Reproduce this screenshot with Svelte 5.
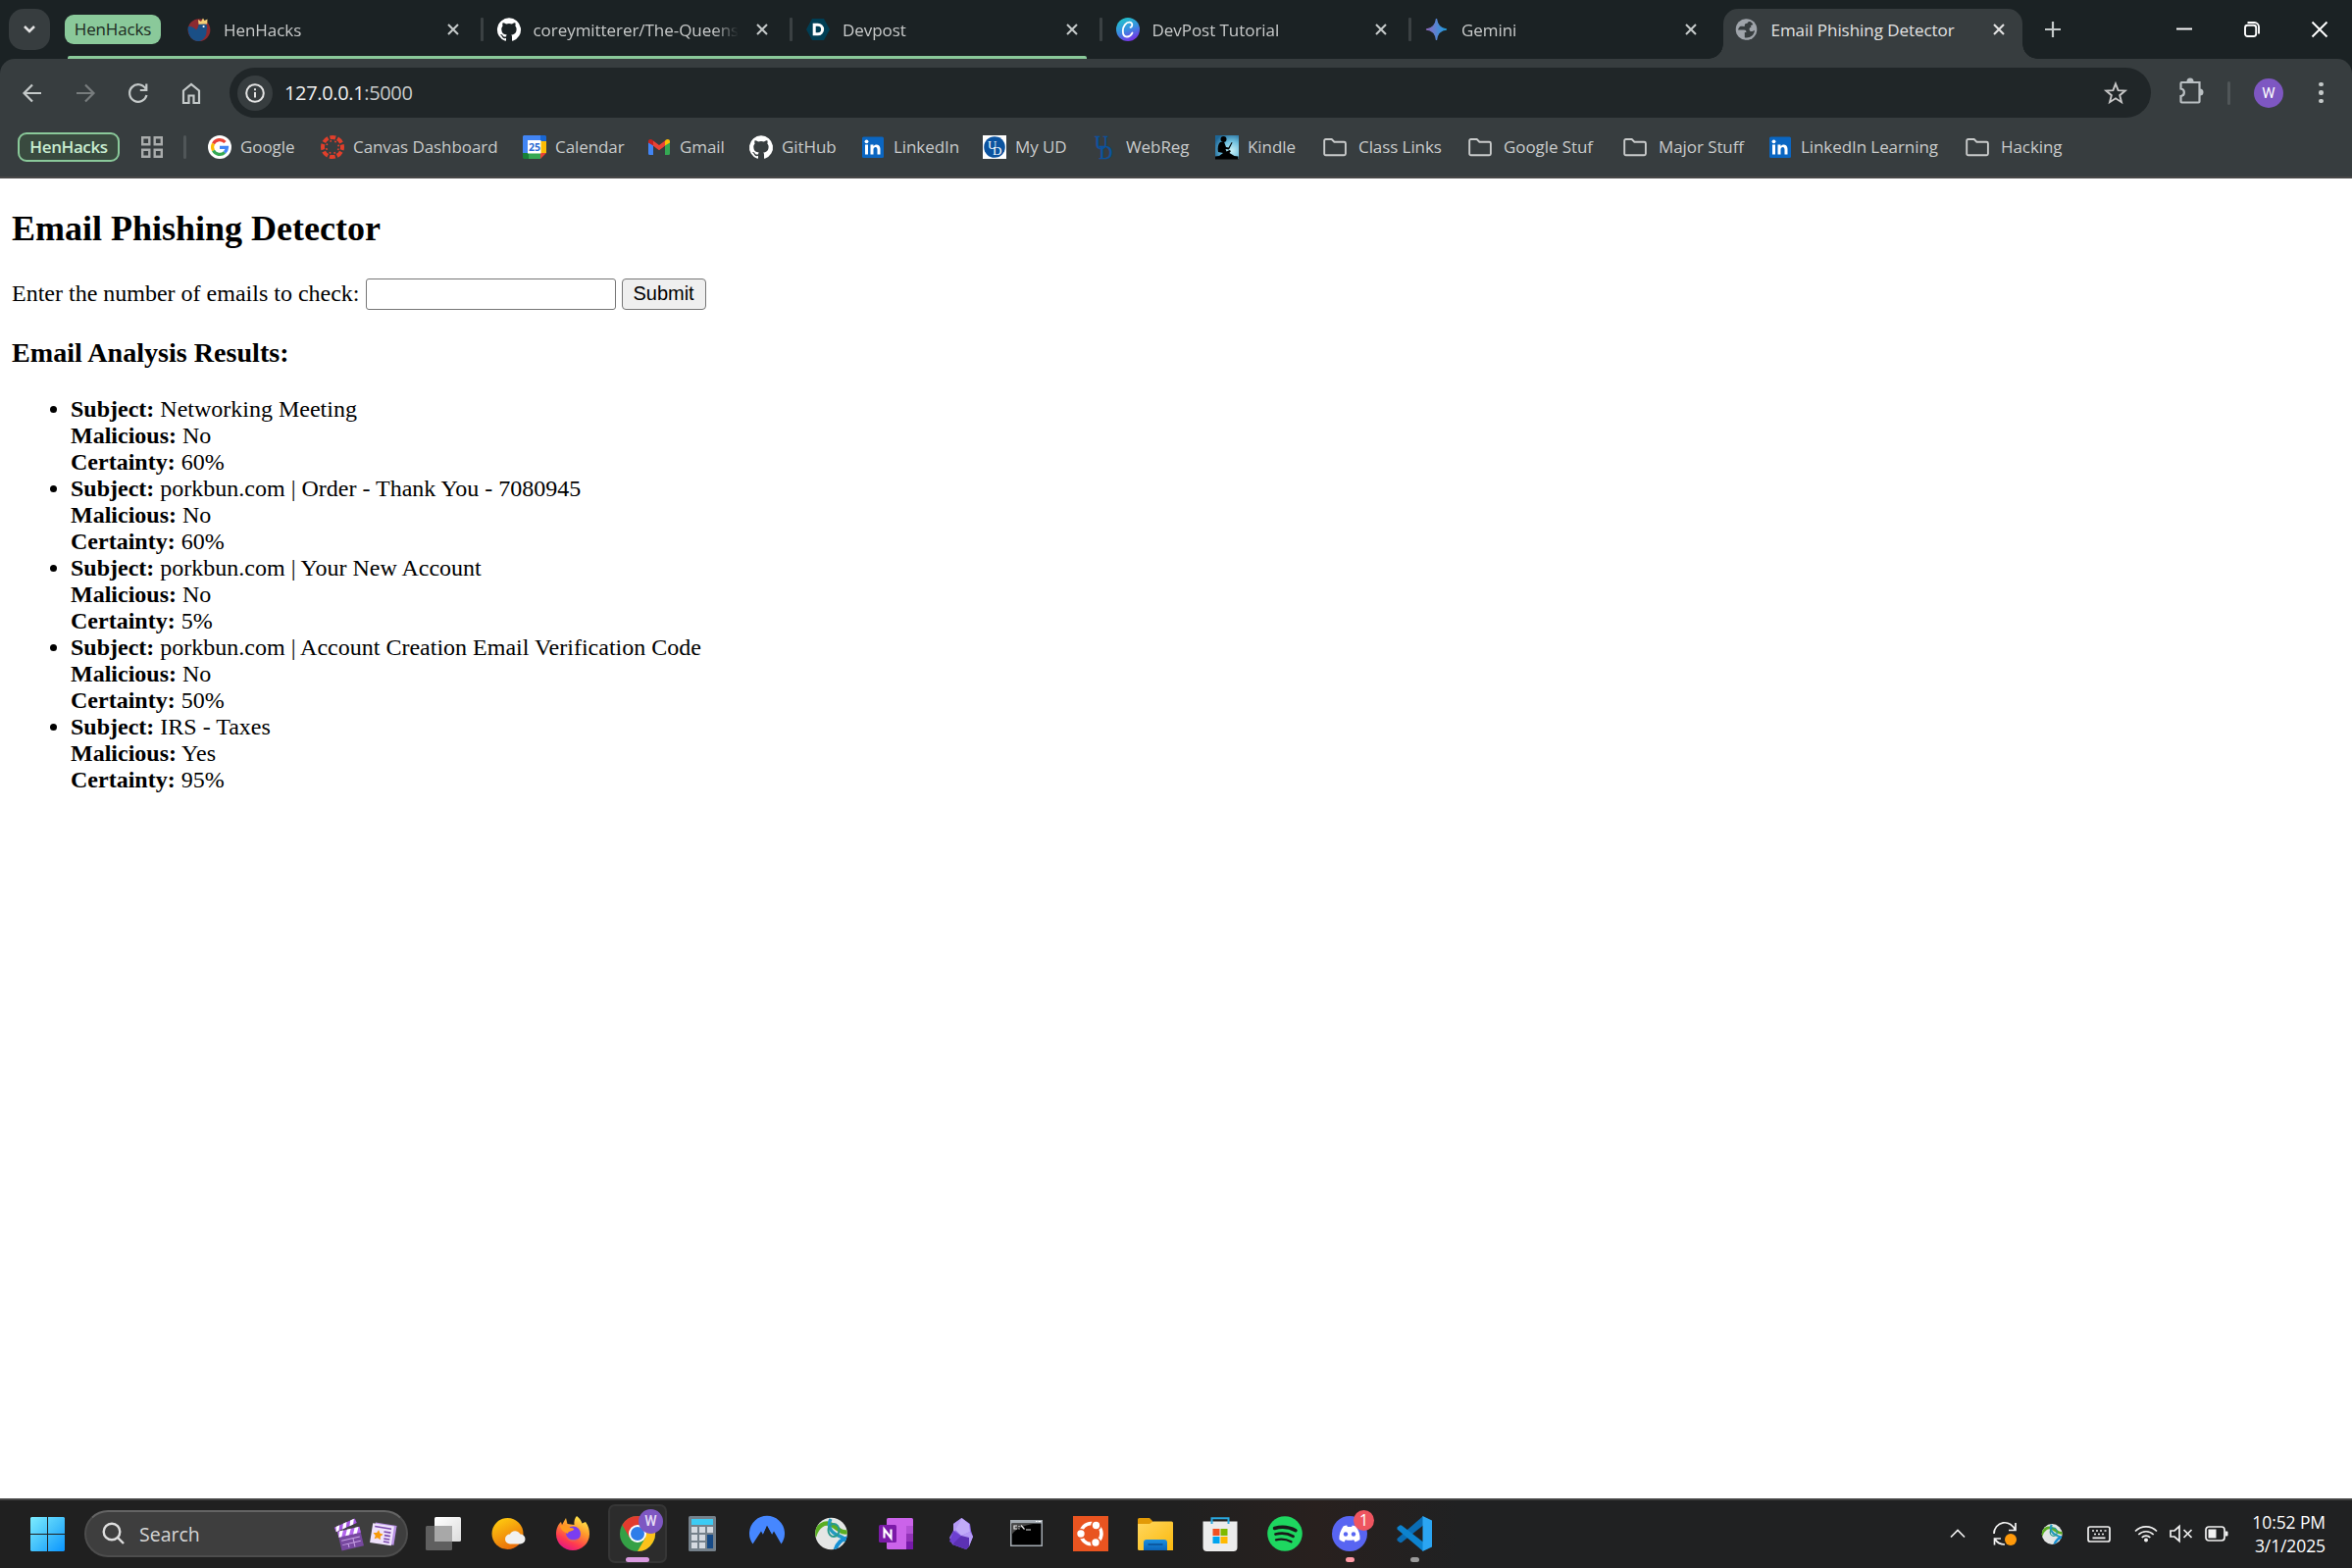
<!-- Desktop view: browser window on the phishing detector page, taskbar below. -->
<script lang="ts">
	type Tab = { title: string; icon: string; active?: boolean; sep?: boolean };
	type Bookmark = { label: string; icon: string; width: number; gap?: number };
	type App = { icon: string; state?: 'active' | 'alert' | 'open' };

	const tabs: Tab[] = [
		{ title: 'HenHacks', icon: 'hen', sep: true },
		{ title: 'coreymitterer/The-Queens', icon: 'github', sep: true },
		{ title: 'Devpost', icon: 'devpost', sep: true },
		{ title: 'DevPost Tutorial', icon: 'canva', sep: true },
		{ title: 'Gemini', icon: 'gemini' },
		{ title: 'Email Phishing Detector', icon: 'globe', active: true }
	];

	// width is the label's box, gap the space between icon and label
	const bookmarks: Bookmark[] = [
		{ label: 'Google', icon: 'google', width: 58 },
		{ label: 'Canvas Dashboard', icon: 'canvas', width: 149 },
		{ label: 'Calendar', icon: 'calendar', width: 70 },
		{ label: 'Gmail', icon: 'gmail', width: 47 },
		{ label: 'GitHub', icon: 'github', width: 57 },
		{ label: 'LinkedIn', icon: 'linkedin', width: 67 },
		{ label: 'My UD', icon: 'myud', width: 57 },
		{ label: 'WebReg', icon: 'webreg', width: 67, gap: 8 },
		{ label: 'Kindle', icon: 'kindle', width: 53 },
		{ label: 'Class Links', icon: 'folder', width: 88, gap: 12 },
		{ label: 'Google Stuf', icon: 'folder', width: 98, gap: 12 },
		{ label: 'Major Stuff', icon: 'folder', width: 88, gap: 12 },
		{ label: 'LinkedIn Learning', icon: 'linkedin', width: 144 },
		{ label: 'Hacking', icon: 'folder', width: 68, gap: 12 }
	];

	const emails = [
		{ subject: 'Networking Meeting', malicious: 'No', certainty: 60 },
		{ subject: 'porkbun.com | Order - Thank You - 7080945', malicious: 'No', certainty: 60 },
		{ subject: 'porkbun.com | Your New Account', malicious: 'No', certainty: 5 },
		{ subject: 'porkbun.com | Account Creation Email Verification Code', malicious: 'No', certainty: 50 },
		{ subject: 'IRS - Taxes', malicious: 'Yes', certainty: 95 }
	];

	const apps: App[] = [
		{ icon: 'taskview' },
		{ icon: 'weather' },
		{ icon: 'firefox' },
		{ icon: 'chrome', state: 'active' },
		{ icon: 'calculator' },
		{ icon: 'nord' },
		{ icon: 'vpn' },
		{ icon: 'onenote' },
		{ icon: 'obsidian' },
		{ icon: 'terminal' },
		{ icon: 'ubuntu' },
		{ icon: 'explorer' },
		{ icon: 'store' },
		{ icon: 'spotify' },
		{ icon: 'discord', state: 'alert' },
		{ icon: 'vscode', state: 'open' }
	];

	let count = $state('');
</script>

{#snippet favicon(name: string)}
	<svg class="fav" viewBox="0 0 24 24">
		{#if name === 'hen'}
			<circle cx="12" cy="12.6" r="11.4" fill="#8c2a30" />
			<path d="M0.7 9.5C3 8.3 6.5 9.5 9 12.5C11 11 11 8 12 6.5L18 6C20.500 7.500 20.500 11 19.500 13C20 19 16 23.500 11.500 24C5 24 0.200 18.500 0.700 9.500z" fill="#1a4f86" />
			<path d="M11.500 6.800L11 2l3 2 2-3.500L17.500 3l3-1.500-.3 5z" fill="#f5cf74" />
			<circle cx="16.600" cy="9" r="1.100" fill="#fff" />
		{:else if name === 'github'}
			<path fill="#fff" d="M12 .3a12 12 0 0 0-3.800 23.400c.6.1.8-.3.8-.6v-2c-3.300.7-4-1.600-4-1.600-.6-1.400-1.400-1.800-1.400-1.800-1-.7.1-.7.1-.7 1.200 0 1.900 1.200 1.900 1.200 1 1.800 2.800 1.300 3.500 1 0-.8.4-1.300.7-1.600-2.700-.3-5.500-1.300-5.500-6 0-1.200.5-2.300 1.300-3.100-.2-.4-.6-1.600 0-3.200 0 0 1-.3 3.400 1.200a11.500 11.500 0 0 1 6 0c2.300-1.500 3.300-1.200 3.300-1.200.6 1.600.2 2.800 0 3.200.9.8 1.300 1.900 1.300 3.200 0 4.600-2.800 5.600-5.500 5.900.5.4.9 1 .9 2.200v3.300c0 .3.1.7.8.6A12 12 0 0 0 12 .3" />
		{:else if name === 'devpost'}
			<path d="M6 1h12l6 11-6 11H6L0 12z" fill="#003e54" />
			<path d="M7.500 6h4.500a6 6 0 0 1 0 12H7.500z" fill="none" stroke="#fff" stroke-width="3.800" transform="translate(2.200 2.400) scale(.8)" />
		{:else if name === 'canva'}
			<defs>
				<linearGradient id="canva-bg" x1=".3" y1="0" x2=".7" y2="1">
					<stop offset="0" stop-color="#20c4cb" /><stop offset=".5" stop-color="#3a8de0" /><stop offset="1" stop-color="#7d2ae8" />
				</linearGradient>
			</defs>
			<circle cx="12" cy="12" r="12" fill="url(#canva-bg)" />
			<path d="M16.500 15.500c-1.300 2.500-3.300 4-5.500 4C8.300 19.500 6.800 17 6.800 13.500c0-4.500 3.200-8.800 6.700-8.800 2 0 3 1.300 2.800 2.800-.1 1.400-1 2.300-1.800 2.300" fill="none" stroke="#fff" stroke-width="1.800" stroke-linecap="round" />
		{:else if name === 'gemini'}
			<defs>
				<linearGradient id="gem" x1="0" y1="0" x2="1" y2="0">
					<stop offset="0" stop-color="#9168c0" /><stop offset=".5" stop-color="#5684d1" /><stop offset="1" stop-color="#1ba1e3" />
				</linearGradient>
			</defs>
			<path d="M11.500 1Q12.500 11 22 12Q12.500 13 11.500 23Q10.500 13 1 12Q10.500 11 11.500 1z" fill="url(#gem)" stroke="url(#gem)" stroke-width="1.200" />
		{:else if name === 'globe'}
			<circle cx="11.500" cy="12" r="10.800" fill="#9fa4aa" />
			<path d="M14 3.500c-1 1.200-1 2.500-2.800 2.600C10 6.200 9.500 7.500 9.800 9c-1.500.2-3.300-.4-4.500-.1-1 .4-2.200 2.300-2.200 3.600H9c2 0 2.500 1 2.400 2.400h-1.600v5.300c5 1 9.600-2 10.200-7.300-1.200.1-1.700 1.200-3.200 1.100-1.500-.1-2.400-1-2.200-2.500.1-1 .8-1.700 2-1.700l-.8-1.500 2.500-1.300c-.8-1.700-2.300-2.900-4.300-3.500z" fill="#373d3f" />
		{:else if name === 'google'}
			<circle cx="12" cy="12" r="12" fill="#fff" />
			<g fill="none" stroke-width="3.200">
				<path d="M17.500 7A7.400 7.400 0 0 0 5.500 8.500" stroke="#ea4335" />
				<path d="M5.500 8.500a7.400 7.400 0 0 0 0 7" stroke="#fbbc04" />
				<path d="M5.500 15.500a7.400 7.400 0 0 0 11.500 2" stroke="#34a853" />
				<path d="M17 17.500a7.400 7.400 0 0 0 2.500-5.200H12" stroke="#4285f4" />
			</g>
		{:else if name === 'canvas'}
			<circle cx="12" cy="12" r="10" fill="none" stroke="#e13f2b" stroke-width="4" stroke-dasharray="5.850 2" stroke-dashoffset="2.900" />
			<circle cx="12" cy="12" r="6.300" fill="none" stroke="#e13f2b" stroke-width="1.700" stroke-dasharray="1.700 3.250" stroke-dashoffset="-1.500" />
		{:else if name === 'calendar'}
			<path d="M1 0h17v6H6v12H0V1z" fill="#4285f4" />
			<path d="M18 0h5l1 1v5h-6z" fill="#1967d2" />
			<path d="M18 6h6v12h-6z" fill="#fbbc04" />
			<path d="M0 18h6v6H1l-1-1z" fill="#188038" />
			<path d="M6 18h12v6H6z" fill="#34a853" />
			<path d="M18 18h6l-6 6z" fill="#ea4335" />
			<path d="M5 5h13.500v13.500H5z" fill="#fff" />
			<text x="11.900" y="16" text-anchor="middle" class="cal">25</text>
		{:else if name === 'gmail'}
			<path d="M1 6.500v12.300c0 .7.500 1.200 1.200 1.200H6V10z" fill="#4285f4" />
			<path d="M23 6.500v12.300c0 .7-.5 1.200-1.200 1.200H18V10z" fill="#34a853" />
			<path d="M1 6.500C1 4 3.500 3.500 5 4.600L6 5.400v5.200L1 7.500z" fill="#c5221f" />
			<path d="M23 6.500C23 4 20.500 3.500 19 4.600l-1 .8v5.200l5-3.100z" fill="#fbbc04" />
			<path d="M6 5.400l6 4.500 6-4.500v5.300l-6 4.500-6-4.500z" fill="#ea4335" />
		{:else if name === 'linkedin'}
			<rect x="1" y="1.500" width="22" height="21.500" rx="1.500" fill="#0a66c2" />
			<path d="M4 9.500h3v10H4zM9.500 9.500h3V11c2-2.700 7-2 7 2.800v5.700h-3V14.500c0-3.500-4-3.200-4 0v5h-3z" fill="#fff" />
			<circle cx="5.500" cy="6.300" r="1.900" fill="#fff" />
		{:else if name === 'myud'}
			<path d="M0 0h24v24H0z" fill="#fff" />
			<circle cx="12" cy="12" r="10.800" fill="#0b539f" />
			<text x="5" y="13.500" class="ud light">U</text>
			<text x="10" y="19.500" class="ud light">D</text>
		{:else if name === 'webreg'}
			<text x="0" y="14" class="ud big">U</text>
			<text x="4.500" y="23.500" class="ud big">D</text>
		{:else if name === 'kindle'}
			<defs>
				<radialGradient id="kin" cx=".7" cy=".65" r=".8">
					<stop offset="0" stop-color="#c9f1f7" /><stop offset=".5" stop-color="#6fc0de" /><stop offset="1" stop-color="#1c6595" />
				</radialGradient>
			</defs>
			<path d="M0 0h24v24H0z" fill="url(#kin)" />
			<g fill="#000">
				<circle cx="8.500" cy="4" r="3" />
				<path d="M5 7l4-.5 2 5.500 2.500.5 3.200-5.500.8.500-3.500 7-3.500-.5 1 2.500 3-1.500 1.500 1-1.500 2 5 3 4 .5v3H0v-3l4-.5 4-3-5-1C2 13 3 9 5 7z" />
			</g>
		{:else if name === 'folder'}
			<path d="M1.200 5.500a1.500 1.500 0 0 1 1.500-1.500h6l2.700 2.700h10a1.500 1.500 0 0 1 1.500 1.500v10.500a1.500 1.500 0 0 1-1.500 1.500H2.700a1.500 1.500 0 0 1-1.500-1.500z" fill="none" stroke="#c9cbcb" stroke-width="1.900" />
		{/if}
	</svg>
{/snippet}

{#snippet cross()}
	<svg class="cross" viewBox="0 0 12 12"><path d="M1 1l10 10M11 1L1 11" /></svg>
{/snippet}

{#snippet appIcon(name: string)}
	<svg class="app-icon" viewBox="0 0 36 36">
		{#if name === 'taskview'}
			<defs><linearGradient id="tv" x2="1" y2="1"><stop stop-color="#fff" /><stop offset="1" stop-color="#dcdcdc" /></linearGradient></defs>
			<rect x="9" y="1" width="27" height="25" rx="1.500" fill="url(#tv)" />
			<rect x="0" y="10" width="27" height="25" rx="1.500" fill="#6b6b6b" opacity=".85" />
			<path d="M9 10h18v16H9z" fill="#a8a8a8" />
		{:else if name === 'weather'}
			<defs><linearGradient id="sun" x1=".2" y1="0" x2=".7" y2="1"><stop stop-color="#ffcd0f" /><stop offset="1" stop-color="#e8680a" /></linearGradient></defs>
			<circle cx="17.500" cy="18" r="16" fill="url(#sun)" />
			<path d="M20 28.500a5 5 0 0 1 0-10c1-3 7-5.500 10.500 0a5 5 0 0 1 0 10z" fill="#f1f1f1" />
		{:else if name === 'firefox'}
			<defs>
				<linearGradient id="fx" x1=".8" y1="0" x2=".3" y2="1"><stop stop-color="#fff44f" /><stop offset=".4" stop-color="#ff9a2b" /><stop offset=".75" stop-color="#ff3b4f" /><stop offset="1" stop-color="#e31587" /></linearGradient>
			</defs>
			<path d="M22 0c3 2 4.500 5 5.500 7.500L31 6c3 4 4 8 4 12.500C35 28 27 35 18 35S1 28 1 18.500C1 13 3 8.500 6 6l1 3 4-7 1.500 6 7 1C19 5.500 20 2 22 0z" fill="url(#fx)" />
			<circle cx="18.500" cy="18" r="7.500" fill="#7a3df0" />
			<path d="M5 10c4-1 8 0 10 2 3 0 5 1 4 2-2 2-6 1-6 4-3-1-7-3-8-8z" fill="#ff9a1f" />
			<path d="M11 18c1 6 8 8 14 4-3 6-14 6-14-4z" fill="#ff6a35" opacity=".7" />
		{:else if name === 'chrome'}
			<circle cx="18" cy="18" r="18" fill="#34a046" />
			<path d="M18 9h15.600A18 18 0 0 1 18 36l7.800-13.500z" fill="#fcc21b" />
			<path d="M2.400 9A18 18 0 0 1 33.600 9H18l-7.800 13.500z" fill="#e33b2e" />
			<circle cx="18" cy="18" r="9" fill="#fff" />
			<circle cx="18" cy="18" r="7" fill="#2f7de9" />
		{:else if name === 'calculator'}
			<rect x="4" y="0" width="28" height="36" rx="1.500" fill="#75818b" />
			<path d="M7 3h22v6H7z" fill="#3ccbf4" />
			<path d="M7 11h6v6H7zM15 11h6v6h-6zM23 11h6v6h-6zM7 19h6v6H7zM15 19h6v6h-6zM7 27h6v6H7zM15 27h6v6h-6z" fill="#d5dae1" />
			<path d="M23 19h6v14h-6z" fill="#164a86" />
		{:else if name === 'nord'}
			<path d="M3.500 28.500A18 18 0 1 1 32.500 28.500L25 15.500l-2 3.500-5-9-4 9-2-3.500z" fill="#4687ff" />
			<path d="M14 19l4-9 5 9-2.500-.5L18 16l-2.500 4z" fill="#1f2022" />
		{:else if name === 'vpn'}
			<clipPath id="ball"><circle cx="17.500" cy="18" r="16.300" /></clipPath>
			<g clip-path="url(#ball)">
				<path d="M0 0h36v36H0z" fill="#e4e6e5" />
				<path d="M0 21C3 10 11 5 18 9s10 9 17 7" fill="none" stroke="#5aae22" stroke-width="4.500" />
				<path d="M17 3c-4 7 0 14 8 17s10 8 8 14" fill="none" stroke="#229abf" stroke-width="3.500" />
				<path d="M21 36c2-8 8-14 15-14" fill="none" stroke="#1690d4" stroke-width="4" />
				<ellipse cx="20" cy="14.500" rx="5.500" ry="6.500" fill="none" stroke="#279a8d" stroke-width="2" />
			</g>
		{:else if name === 'onenote'}
			<rect x="8" y="2" width="27" height="32" rx="1.500" fill="#cb63ea" />
			<path d="M28 10h7v9h-7z" fill="#b351d5" /><path d="M28 18h7v8h-7z" fill="#9333b8" /><path d="M28 26h7v8h-7z" fill="#7719aa" />
			<rect x="0" y="9" width="18" height="18" rx="1.500" fill="#7b1aa8" />
			<path d="M5.500 22.500v-9l7 9v-9" fill="none" stroke="#fff" stroke-width="2.200" />
		{:else if name === 'obsidian'}
			<path d="M18.500 2L27 8l1 7 2 6-4 10-3 3-14-5-3-7 4-7 0-7z" fill="#8f6be8" />
			<path d="M18.500 2L12 15l-2 .5V8zM18 20l9-4 3 5-4 10z" fill="#b59af5" />
			<path d="M10 15l8 5-6 9-6-3z" fill="#6d3fd0" />
			<path d="M18 20l8 2v9l-3 3-14-5z" fill="#5c31b4" />
			<path d="M18.500 2L12 14l6 6 9-4-1-8z" fill="#c1abf8" />
		{:else if name === 'terminal'}
			<path d="M2 4h33v27H2z" fill="#a4abb2" /><path d="M3.500 7.500h30v22h-30z" fill="#000" />
			<path d="M3.500 7.500h27C20 8 8 12 3.500 19z" fill="#484848" />
			<path d="M9 10H6v3h3M11 10v1M11 12.500v1M13 9.500l3.500 4M18 14h5" fill="none" stroke="#e8e8e8" stroke-width="1.200" />
			<path d="M28 5.500h1.500M30.500 5.500h3" stroke="#fff" />
		{:else if name === 'ubuntu'}
			<path d="M0 0h36v36H0z" fill="#e95420" />
			<circle cx="18.500" cy="18" r="10.500" fill="none" stroke="#fff" stroke-width="3.600" />
			<g fill="#fff" stroke="#e95420" stroke-width="1.600"><circle cx="8" cy="18" r="4.500" /><circle cx="23.500" cy="9.500" r="4.500" /><circle cx="23" cy="27" r="4.500" /></g>
		{:else if name === 'explorer'}
			<defs>
				<linearGradient id="fold" x2="1" y2="1"><stop stop-color="#ffd75e" /><stop offset="1" stop-color="#fbb90d" /></linearGradient>
				<linearGradient id="fold-b" x2="0" y2="1"><stop stop-color="#1b8fe0" /><stop offset="1" stop-color="#0c64b8" /></linearGradient>
			</defs>
			<path d="M0 3.500A1.500 1.500 0 0 1 1.500 2H12l3 3v4H0z" fill="#e29a06" />
			<path d="M0 8h12l3.500-2.500H34.500A1.500 1.500 0 0 1 36 7v28H1.500A1.500 1.500 0 0 1 0 33.500z" fill="url(#fold)" />
			<path d="M6 35v-8a3 3 0 0 1 3-3h18a3 3 0 0 1 3 3v8z" fill="url(#fold-b)" />
			<path d="M10.500 29h15" stroke="#0a4f94" stroke-width="1.500" />
		{:else if name === 'store'}
			<path d="M.5 5.500h35V32a4 4 0 0 1-4 4h-27a4 4 0 0 1-4-4z" fill="#ececec" />
			<path d="M9.500 8V2.200h17V8" fill="none" stroke="#2aa8e0" stroke-width="2" />
			<path d="M10.500 13h7v7h-7z" fill="#f25022" /><path d="M18.500 13h7v7h-7z" fill="#7fba00" />
			<path d="M10.500 21h7v7h-7z" fill="#00a4ef" /><path d="M18.500 21h7v7h-7z" fill="#ffb900" />
		{:else if name === 'spotify'}
			<circle cx="18" cy="18" r="17.800" fill="#1ed760" />
			<g fill="none" stroke="#191919" stroke-linecap="round"><path d="M7.500 12.500c7-2 15-1.300 21.500 2.300" stroke-width="3.400" /><path d="M8.500 18.500c6-1.600 12.500-1 18 2.200" stroke-width="2.800" /><path d="M9 24.300c5.500-1.200 10.500-.7 15.500 2" stroke-width="2.300" /></g>
		{:else if name === 'discord'}
			<circle cx="18" cy="18" r="18" fill="#5865f2" />
			<path d="M11.500 10.500c1.500-.6 3-.9 3.700-1l.7 1.500h4.200l.7-1.500c1.300.2 2.500.5 3.700 1 3 4.500 4.500 9 4 13.500-1.500 1.300-3.200 2-5 2.500l-1.300-2.200c-2.700.7-5.700.7-8.400 0l-1.300 2.200c-1.800-.5-3.500-1.200-5-2.500-.500-4.500 1-9 4-13.500z" fill="#fff" />
			<circle cx="14" cy="18.500" r="2.200" fill="#5865f2" /><circle cx="22" cy="18.500" r="2.200" fill="#5865f2" />
		{:else if name === 'vscode'}
			<path d="M27 0v9.500L5 27l-1.500.3L.5 25v-2z" fill="#0a6cb4" />
			<path d="M3.500 9.200L.5 11.500v2L27 36V26.500L5 9.500z" fill="#0d83cf" />
			<path d="M26.500 0L36 4.500v27L26.500 36z" fill="#2ba5f2" />
		{/if}
	</svg>
{/snippet}

<div class="desktop">
	<div class="strip">
		<div class="search-tabs">
			<svg viewBox="0 0 14 10" width="14" height="10"><path d="M2 2l5 5 5-5" /></svg>
		</div>
		<div class="group-chip">HenHacks</div>
		<div class="tabs">
			<div class="group-line"></div>
			{#each tabs as tab}
				<div class="tab" class:current={tab.active} class:sep={tab.sep}>
					{@render favicon(tab.icon)}
					<span class="title">{tab.title}</span>
					{@render cross()}
				</div>
			{/each}
		</div>
		<svg class="plus" viewBox="0 0 16 16"><path d="M8 0v16M0 8h16" /></svg>
		<div class="controls">
			<svg viewBox="0 0 16 16"><path d="M0 7.500h16" /></svg>
			<svg viewBox="0 0 16 16"><path d="M3.500 1h7a4.500 4.500 0 0 1 4.500 4.500v7" /><rect x="1" y="3.800" width="11.200" height="11.200" rx="2.500" /></svg>
			<svg viewBox="0 0 16 16"><path d="M.5 .5l15 15M15.500 .5l-15 15" /></svg>
		</div>
	</div>

	<div class="chrome">
		<div class="toolbar">
			<div class="nav">
				<svg viewBox="0 0 24 24"><path d="M21 12H4M12 3.500L3.500 12l8.500 8.500" /></svg>
				<svg class="dim" viewBox="0 0 24 24"><path d="M3 12h17M12 3.500l8.500 8.500-8.500 8.500" /></svg>
				<svg viewBox="0 0 24 24"><path d="M19.500 7.500A8.800 8.800 0 1 0 20.500 14M20.300 2.500v6.500h-6.500" /></svg>
				<svg viewBox="0 0 24 24"><path d="M4 9.500L12 3l8 6.500V22h-5.500v-7.500h-5V22H4z" /></svg>
			</div>
			<div class="omnibox">
				<span class="info"><svg viewBox="0 0 20 20"><circle cx="10" cy="10" r="8.800" /><path d="M10 9v5.500M10 5.300v2" /></svg></span>
				<span class="url">127.0.0.1<i>:5000</i></span>
				<svg class="star" viewBox="0 0 24 24"><path d="M12 2.500l2.600 6.700 7.100.4-5.500 4.600 1.800 7L12 17.300l-6 3.900 1.800-7-5.500-4.600 7.100-.4z" /></svg>
			</div>
			<svg class="ext" viewBox="0 0 26 28"><path d="M3.500 5h19v19.500a1 1 0 0 1-1 1h-17a1 1 0 0 1-1-1V19c4.500-.5 4.500-7 0-7.500V6a1 1 0 0 1 1-1z" /><path class="knob" d="M9.500 4a3.500 3.500 0 0 1 7 0zM23 11.500a3.500 3.500 0 0 1 0 7z" /></svg>
			<span class="rule"></span>
			<span class="avatar">W</span>
			<span class="dots"><b></b><b></b><b></b></span>
		</div>
		<div class="bookmarks">
			<span class="saved-group">HenHacks</span>
			<svg class="grid-icon" viewBox="0 0 22 22"><path d="M1.200 1.200h7.100v7.100H1.200zM13.700 1.200h7.100v7.100h-7.100zM1.200 13.700h7.100v7.100H1.200zM13.700 13.700h7.100v7.100h-7.100z" /></svg>
			<span class="rule"></span>
			{#each bookmarks as mark}
				<span class="bookmark" style={`gap:${mark.gap ?? 9}px`}>
					{@render favicon(mark.icon)}
					<span class="label" style={`width:${mark.width}px`}>{mark.label}</span>
				</span>
			{/each}
		</div>
	</div>

	<main>
		<h2>Email Phishing Detector</h2>
		<form onsubmit={(e) => e.preventDefault()}>
			<label for="count">Enter the number of emails to check:</label>
			<input id="count" bind:value={count} />
			<button>Submit</button>
		</form>
		<h3>Email Analysis Results:</h3>
		<ul>
			{#each emails as mail}
				<li>
					<strong>Subject:</strong> {mail.subject}<br />
					<strong>Malicious:</strong> {mail.malicious}<br />
					<strong>Certainty:</strong> {mail.certainty}%
				</li>
			{/each}
		</ul>
	</main>

	<div class="taskbar">
		<svg class="start" viewBox="0 0 35 35">
			<defs><linearGradient id="win" x2="1" y2="1"><stop stop-color="#7cecff" /><stop offset=".5" stop-color="#45c2fb" /><stop offset="1" stop-color="#0a95ff" /></linearGradient></defs>
			<path d="M1 0h16v17H0V1zM18 0h16l1 1v16H18zM0 18h17v17H1l-1-1zM18 18h17v16l-1 1H18z" fill="url(#win)" />
		</svg>
		<div class="search">
			<svg class="lens" viewBox="0 0 24 24"><circle cx="10" cy="10" r="8.300" /><path d="M16 16l6 6" /></svg>
			<span>Search</span>
			<svg class="promo" viewBox="0 0 64 34">
				<g transform="rotate(-24 12 9)"><path d="M1 6h23v5H1z" fill="#a656e4" /><path d="M3 6h4l-3 5H1zM11 6h4l-3 5H8zM19 6h4l-3 5h-4z" fill="#fff" /></g>
				<g transform="rotate(-13 18 22)"><path d="M6 14h23v18H6z" fill="#77489f" /><path d="M6 12h23v6H6z" fill="#b467ee" /><path d="M8 12h4l-3 6H6zM16 12h4l-3 6h-4zM24 12h4l-3 6h-4z" fill="#fff" /><path d="M8 22h19M8 26.500h19M14 26.500v4M20 22v9" stroke="#c9a3e6" fill="none" /></g>
				<g transform="rotate(9 51 18)"><path d="M41 7h22v20H41z" fill="#b891e4" /><path d="M38.500 8h22v20h-22z" fill="#efe2fc" /><path d="M41 11h17M51 15h7M52 18.500h6M52 22h6M52 25h6" stroke="#7a4aae" stroke-width="1.600" /><path d="M45.500 14l1.600 3.200 3.500.5-2.500 2.500.6 3.500-3.200-1.600-3.100 1.600.6-3.500-2.600-2.500 3.500-.5z" fill="#f79a0c" /></g>
			</svg>
		</div>
		<div class="apps">
			{#each apps as app}
				<div class={['app', app.state]}>
					{@render appIcon(app.icon)}
					{#if app.state === 'active'}<span class="who">W</span>{/if}
					{#if app.state === 'alert'}<span class="who count">1</span>{/if}
				</div>
			{/each}
		</div>
		<div class="tray">
			<svg class="up" viewBox="0 0 16 10"><path d="M1 8.500l7-7 7 7" /></svg>
			<svg class="sync" viewBox="0 0 24 24"><path d="M1 12A11 11 0 0 1 22.500 8.500M23 1v7.500h-7M1.500 23.500V17H8M2 17.500c2 3.500 5.500 5.500 10 5.500" /><circle cx="18" cy="18" r="6" fill="#ff9a0b" stroke="none" /></svg>
			<span class="mini">{@render appIcon('vpn')}</span>
			<svg class="kbd" viewBox="0 0 24 17"><rect x="1" y="1" width="22" height="15" rx="2" /><path d="M5 5h2M9 5h2M13 5h2M17.500 5h2M7 8.500h2M11 8.500h2M15 8.500h2M5.500 12.300h13" /></svg>
			<svg class="wifi" viewBox="0 0 24 18"><path d="M1 6.500a15.500 15.500 0 0 1 22 0M4.300 10a10.700 10.700 0 0 1 15.400 0M7.700 13a6 6 0 0 1 8.600 0" /><circle cx="12" cy="15.500" r="2" /></svg>
			<svg class="mute" viewBox="0 0 24 18"><path d="M1 6v6h4l5 4.500v-15L5 6zM14.500 5l8 8M22.500 5l-8 8" /></svg>
			<svg class="battery" viewBox="0 0 24 16"><rect x="1" y="1" width="19" height="14" rx="3" /><path class="full" d="M3.500 3.500h8v9h-8zM21 5.500h1.500a1 1 0 0 1 1 1v3a1 1 0 0 1-1 1H21z" /></svg>
			<div class="clock">10:52 PM<br />3/1/2025</div>
		</div>
	</div>
</div>

<style>
	:global(body) {
		background: #fff;
	}
	.desktop {
		--frame: #1b2224;
		--bar: #373d3f;
		--green: #8ac99a;
		display: flex;
		flex-direction: column;
		height: 1599px;
		overflow: hidden;
		/* the frame colour shows behind the toolbar's rounded corners */
		background: linear-gradient(var(--frame) 80px, #fff 80px);
		font-family: 'Open Sans', 'Noto Sans', sans-serif;
		font-size: 17px;
		color: #c9cbcb;
	}
	svg {
		display: block;
		flex: none;
		fill: none;
		overflow: visible;
	}
	.fav {
		width: 24px;
		height: 24px;
	}
	.cal {
		font: bold 10.5px 'Open Sans', sans-serif;
		fill: #2d6bd3;
	}
	.ud {
		font: 13px 'Liberation Serif', serif;
		fill: #0b539f;
	}
	.ud.light {
		fill: #fff;
	}
	.ud.big {
		font-size: 19px;
		stroke: #0b539f;
		stroke-width: 0.5;
	}

	/* tab strip */
	.strip {
		display: flex;
		align-items: center;
		height: 60px;
		padding-left: 9px;
		background: var(--frame);
	}
	.search-tabs {
		display: grid;
		place-items: center;
		width: 42px;
		height: 42px;
		border-radius: 15px;
		background: var(--bar);
	}
	.search-tabs path {
		stroke: #e3e3e3;
		stroke-width: 2.5;
	}
	.group-chip {
		width: 98px;
		height: 30px;
		margin-left: 15px;
		border-radius: 9px;
		background: var(--green);
		color: #1c2a21;
		line-height: 29px;
		text-align: center;
		letter-spacing: -0.15px;
	}
	.tabs {
		position: relative;
		display: flex;
		align-self: stretch;
		margin-left: 11px;
	}
	.group-line {
		position: absolute;
		left: -106px;
		bottom: 0;
		width: 1039px;
		height: 3px;
		border-radius: 2px 2px 0 0;
		background: var(--green);
	}
	.tab {
		position: relative;
		display: flex;
		align-items: center;
		box-sizing: border-box;
		width: 315.5px;
		padding: 0 23px 0 16px;
		z-index: 0;
	}
	.tab.sep::after {
		content: '';
		position: absolute;
		right: -2px;
		top: 18px;
		width: 3px;
		height: 24px;
		border-radius: 1px;
		background: #3b4143;
	}
	.title {
		flex: 1;
		margin: 1px 16px 0 13px;
		overflow: hidden;
		white-space: nowrap;
		letter-spacing: -0.05px;
		mask-image: linear-gradient(to right, #000 87%, transparent 99%);
	}
	.cross {
		width: 12px;
		height: 12px;
	}
	.cross path {
		stroke: #c4c9c9;
		stroke-width: 2.1;
	}
	.current {
		padding-right: 24px;
		color: #e3e3e3;
	}
	.current .title {
		mask-image: none;
	}
	.current .cross path {
		stroke: #e3e3e3;
	}
	/* flared feet of the selected tab */
	.current::before {
		content: '';
		position: absolute;
		z-index: -1;
		inset: 9px -9px 0 -11px;
		background:
			radial-gradient(circle at 0 0, transparent 14.5px, var(--bar) 15px) 0 100% / 15px 15px no-repeat,
			radial-gradient(circle at 100% 0, transparent 14.5px, var(--bar) 15px) 100% 100% / 15px 15px no-repeat;
	}
	.current::after {
		content: '';
		position: absolute;
		z-index: -1;
		inset: 9px 6px 0 4px;
		border-radius: 15px 15px 0 0;
		background: var(--bar);
	}
	.plus {
		width: 16px;
		height: 16px;
		margin-left: 17px;
	}
	.plus path {
		stroke: #c4c9c9;
		stroke-width: 2.2;
	}
	.controls {
		display: flex;
		gap: 53px;
		margin: 0 25px 0 auto;
	}
	.controls svg {
		width: 16px;
		height: 16px;
		stroke: #fff;
		stroke-width: 1.9;
	}

	/* toolbar and bookmarks */
	.chrome {
		box-sizing: border-box;
		height: 122px;
		border-bottom: 2px solid #484848;
		border-radius: 15px 15px 0 0;
		background: var(--bar);
	}
	.toolbar {
		display: flex;
		align-items: center;
		padding: 9px 27px 0 21px;
	}
	.nav {
		display: flex;
		gap: 30px;
	}
	.nav svg {
		width: 24px;
		height: 24px;
		stroke: #c4c9c9;
		stroke-width: 2.2;
	}
	.nav .dim {
		stroke: #777c7d;
	}
	.omnibox {
		display: flex;
		align-items: center;
		box-sizing: border-box;
		width: 1959px;
		height: 51px;
		margin-left: 27px;
		padding: 0 24px 0 8px;
		border-radius: 26px;
		background: #202628;
	}
	.info {
		display: grid;
		place-items: center;
		width: 36px;
		height: 36px;
		border-radius: 50%;
		background: #373d3f;
	}
	.info svg {
		width: 20px;
		height: 20px;
		stroke: #e3e3e3;
		stroke-width: 2;
	}
	.url {
		margin: -1px 0 0 12px;
		font-size: 20px;
		letter-spacing: -0.35px;
		color: #f0f0f0;
	}
	.url i {
		font-style: normal;
		color: #c9cbcb;
	}
	.star {
		width: 24px;
		height: 24px;
		margin-left: auto;
		stroke: #c7c7c7;
		stroke-width: 1.9;
	}
	.ext {
		width: 26px;
		height: 28px;
		margin: -3px 0 0 27px;
		stroke: #b9bfc2;
		stroke-width: 2.2;
	}
	.knob {
		fill: #b9bfc2;
		stroke: none;
	}
	.rule {
		width: 3px;
		height: 24px;
		border-radius: 2px;
		background: #505658;
	}
	.toolbar .rule {
		margin-left: 25px;
	}
	.avatar {
		width: 30px;
		height: 30px;
		margin-left: 24px;
		border-radius: 50%;
		background: #7e57c2;
		color: #fff;
		font: 15px/30px Roboto, sans-serif;
		text-align: center;
	}
	.dots {
		display: flex;
		flex-direction: column;
		gap: 4px;
		margin-left: 36px;
	}
	.dots b {
		width: 4.5px;
		height: 4.5px;
		border-radius: 50%;
		background: #c4c9c9;
	}
	.bookmarks {
		display: flex;
		align-items: center;
		padding: 15px 0 0 18px;
	}
	.saved-group {
		box-sizing: border-box;
		width: 104px;
		height: 30px;
		border: 2px solid var(--green);
		border-radius: 9px;
		background: #394a3f;
		color: #c8ecd0;
		font-weight: 600;
		line-height: 25px;
		text-align: center;
		letter-spacing: -0.4px;
	}
	.grid-icon {
		width: 22px;
		height: 22px;
		margin-left: 22px;
		stroke: #a9acac;
		stroke-width: 2.4;
	}
	.bookmarks .rule {
		margin: 0 22px 0 21px;
	}
	.bookmark {
		display: flex;
		align-items: center;
		margin-right: 24px;
	}
	.label {
		margin-top: -1px;
		white-space: nowrap;
		letter-spacing: -0.08px;
	}

	/* page */
	main {
		flex: 1;
		padding: 0 12px;
		background: #fff;
		color: #000;
		font: 24px/27px 'Liberation Serif', 'Times New Roman', serif;
	}
	h2 {
		margin: 31px 0 29px;
		font-size: 36px;
		line-height: 41px;
	}
	form {
		display: flex;
		align-items: center;
		height: 34px;
	}
	label {
		margin-bottom: 2px;
	}
	input {
		box-sizing: border-box;
		width: 255px;
		height: 32px;
		margin: 0 6px;
		border: 1px solid #767676;
		border-radius: 3px;
		font: 20px 'Liberation Sans', sans-serif;
	}
	button {
		box-sizing: border-box;
		width: 86px;
		height: 32px;
		padding: 0 0 2px;
		border: 1px solid #767676;
		border-radius: 4px;
		background: #efefef;
		color: #000;
		font: 20px 'Liberation Sans', sans-serif;
	}
	h3 {
		margin: 27px 0 28px;
		font-size: 28.1px;
		line-height: 32px;
	}
	ul {
		margin: 24px 0;
		padding-left: 60px;
	}

	/* taskbar */
	.taskbar {
		display: flex;
		align-items: center;
		box-sizing: border-box;
		height: 71px;
		padding: 0 27px 1px 31px;
		border-top: 2px solid #444;
		background: linear-gradient(90deg, #202020 50%, #28201e 56%, #202122 62%);
	}
	.start {
		width: 35px;
		height: 35px;
	}
	.search {
		display: flex;
		align-items: center;
		box-sizing: border-box;
		width: 330px;
		height: 48px;
		margin-left: 20px;
		padding: 0 10px 0 16px;
		border: 2px solid #4d4d4d;
		border-top-color: #646464;
		border-radius: 24px;
		background: #3e3e3e;
		font-size: 19.5px;
		color: #d6d6d6;
	}
	.lens {
		width: 24px;
		height: 24px;
		margin-right: 14px;
		stroke: #dedede;
		stroke-width: 2.4;
	}
	.promo {
		width: 64px;
		height: 34px;
		margin-left: auto;
	}
	.apps {
		display: flex;
		gap: 6px;
		margin-left: 6px;
	}
	.app {
		position: relative;
		display: grid;
		place-items: center;
		box-sizing: border-box;
		width: 60px;
		height: 60px;
		border-radius: 7px;
	}
	.app::after {
		position: absolute;
		bottom: 1px;
		width: 9px;
		height: 5px;
		border-radius: 3px;
	}
	.active {
		border: 2px solid #363636;
		background: #2c2c2c;
	}
	.active::after {
		content: '';
		bottom: -1px;
		width: 24px;
		background: #d99ae0;
	}
	.alert::after {
		content: '';
		background: #ff99a4;
	}
	.open::after {
		content: '';
		background: #9a9a9a;
	}
	.app-icon {
		width: 36px;
		height: 36px;
	}
	.who {
		position: absolute;
		top: 3px;
		left: 29px;
		width: 25px;
		height: 25px;
		border-radius: 50%;
		background: #7e57c2;
		color: #e6dcf5;
		font: 500 14px/25px Roboto, sans-serif;
		text-align: center;
	}
	.who.count {
		top: 6px;
		left: 34px;
		width: 21px;
		height: 21px;
		background: #ee5560;
		font: 16px/21px 'Open Sans', sans-serif;
		color: #fff;
	}
	.tray {
		display: flex;
		align-items: center;
		margin-left: auto;
	}
	.tray > svg {
		stroke: #f2f2f2;
		stroke-width: 1.7;
	}
	.up {
		width: 16px;
		height: 10px;
		margin-right: 28px;
	}
	.sync {
		width: 24px;
		height: 24px;
		margin-right: 25px;
	}
	.mini .app-icon {
		width: 23px;
		height: 23px;
	}
	.kbd {
		width: 24px;
		height: 17px;
		margin: 0 24px;
	}
	.wifi,
	.mute {
		width: 24px;
		height: 18px;
		margin-right: 12px;
	}
	.wifi circle,
	.full {
		fill: #f2f2f2;
		stroke: none;
	}
	.battery {
		width: 24px;
		height: 16px;
	}
	.clock {
		width: 99px;
		color: #fff;
		font-size: 17.5px;
		line-height: 24px;
		text-align: right;
		letter-spacing: -0.1px;
	}
</style>
